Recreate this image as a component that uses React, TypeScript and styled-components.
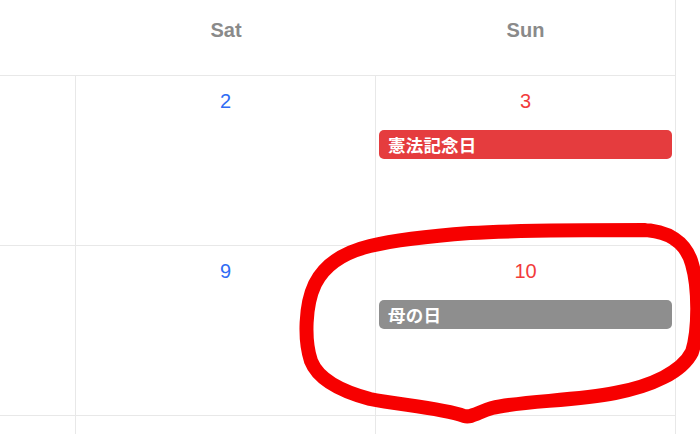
import React from "react";
import styled, { createGlobalStyle } from "styled-components";

const GlobalStyle = createGlobalStyle`
  html, body { margin: 0; padding: 0; background: #ffffff; }
  body { font-family: "Liberation Sans", Arial, sans-serif; }
`;

const Page = styled.div`
  position: relative;
  width: 700px;
  height: 434px;
  overflow: hidden;
  background: #ffffff;
`;

const Calendar = styled.div`
  width: 676px;
  border-right: 1px solid #e8e8e8;
  box-sizing: border-box;
`;

const HeaderRow = styled.div`
  display: grid;
  grid-template-columns: 76px 300px 299px;
  height: 76px;
  border-bottom: 1px solid #e8e8e8;
  box-sizing: border-box;
`;

const HeaderCell = styled.div`
  padding-top: 18px;
  text-align: center;
  font-size: 20px;
  line-height: 24px;
  font-weight: bold;
  color: #8a8a8a;
`;

const WeekRow = styled.div`
  display: grid;
  grid-template-columns: 76px 300px 299px;
  height: 170px;
  border-bottom: 1px solid #e8e8e8;
  box-sizing: border-box;
`;

const DayCell = styled.div`
  display: flex;
  flex-direction: column;
  align-items: stretch;
  padding: 14px 3px 0 3px;
  box-sizing: border-box;
  &:not(:last-child) {
    border-right: 1px solid #e8e8e8;
  }
`;

const DayNumber = styled.div<{ $tone: "sat" | "sun" | "plain" }>`
  text-align: center;
  font-size: 20px;
  line-height: 22px;
  color: ${(p) =>
    p.$tone === "sat" ? "#2f6cf4" : p.$tone === "sun" ? "#f23b3b" : "#333333"};
`;

const EventBar = styled.div<{ $kind: "holiday" | "observance" }>`
  margin-top: 18px;
  height: 29px;
  border-radius: 5px;
  padding-left: 9px;
  display: flex;
  align-items: center;
  background: ${(p) => (p.$kind === "holiday" ? "#e53c3e" : "#8e8e8e")};
  color: #ffffff;
  font-family: "Noto Sans CJK JP", "Liberation Sans", sans-serif;
  font-weight: bold;
  font-size: 17.5px;
  letter-spacing: 0.2px;
  white-space: nowrap;
  overflow: hidden;
`;

const Scribble = styled.svg`
  position: absolute;
  left: 0;
  top: 0;
  width: 700px;
  height: 434px;
  pointer-events: none;
`;

type Ev = { title: string; kind: "holiday" | "observance" };
type Week = { sat: number; sun: number; satEv?: Ev; sunEv?: Ev };

const weeks: Week[] = [
  { sat: 2, sun: 3, sunEv: { title: "憲法記念日", kind: "holiday" } },
  { sat: 9, sun: 10, sunEv: { title: "母の日", kind: "observance" } },
  { sat: 16, sun: 17 },
];

export default function App() {
  return (
    <>
      <GlobalStyle />
      <Page>
        <Calendar>
          <HeaderRow>
            <HeaderCell />
            <HeaderCell>Sat</HeaderCell>
            <HeaderCell>Sun</HeaderCell>
          </HeaderRow>
          {weeks.map((w) => (
            <WeekRow key={w.sat}>
              <DayCell />
              <DayCell>
                <DayNumber $tone="sat">{w.sat}</DayNumber>
                {w.satEv && <EventBar $kind={w.satEv.kind}>{w.satEv.title}</EventBar>}
              </DayCell>
              <DayCell>
                <DayNumber $tone="sun">{w.sun}</DayNumber>
                {w.sunEv && <EventBar $kind={w.sunEv.kind}>{w.sunEv.title}</EventBar>}
              </DayCell>
            </WeekRow>
          ))}
        </Calendar>
        <Scribble viewBox="0 0 700 434">
          <path
            d="M 640 230 C 668 230 686 242 692 264 C 699 288 699 330 692 352 C 682 372 652 386 615 393 C 575 401 520 401 492 408 C 478 412 472 418 464 416 C 442 408 400 405 370 399 C 340 391 318 379 311 361 C 304 340 305 305 315 284 C 325 264 345 252 370 246 C 395 240 430 236 470 233 C 520 230 580 230 645 230"
            fill="none"
            stroke="#f70000"
            strokeWidth={14}
            strokeLinecap="round"
            strokeLinejoin="round"
          />
        </Scribble>
      </Page>
    </>
  );
}
